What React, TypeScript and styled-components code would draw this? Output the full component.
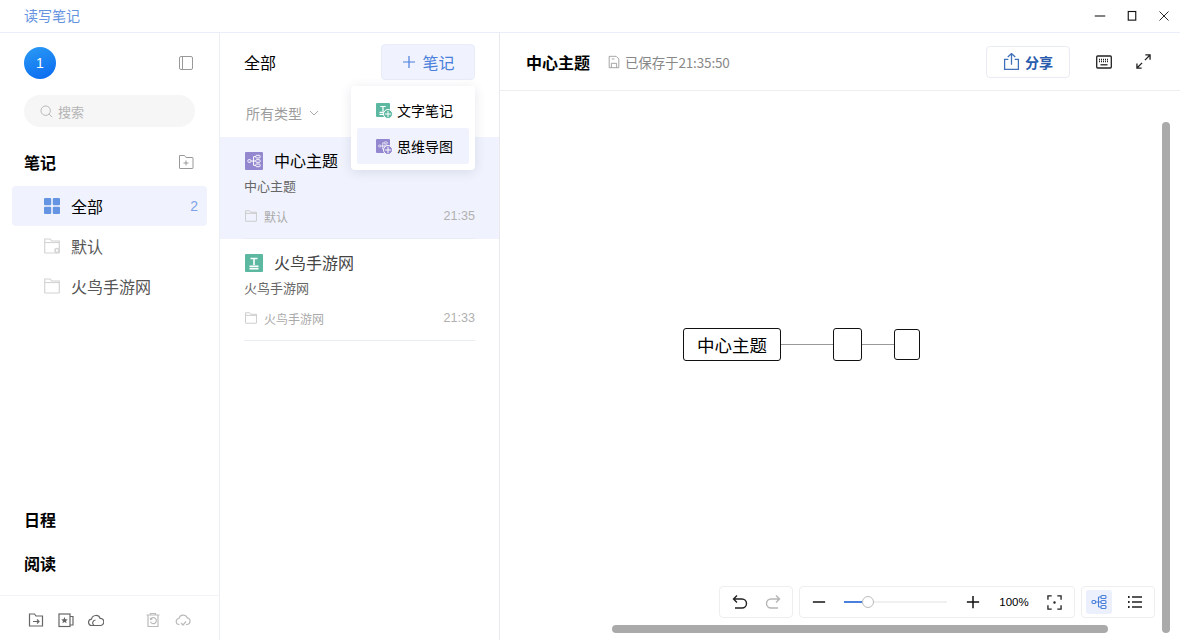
import { FC, ReactNode } from "react";
import styled, { createGlobalStyle } from "styled-components";

const GlobalStyle = createGlobalStyle`
  html, body {
    margin: 0;
    padding: 0;
    background: #fff;
  }
  body {
    font-family: "Noto Sans CJK SC", "Liberation Sans", sans-serif;
    color: #000;
  }
  * {
    box-sizing: border-box;
  }
`;

const Window = styled.div`
  width: 1180px;
  height: 640px;
  display: flex;
  flex-direction: column;
  overflow: hidden;
`;

const TitleBar = styled.header`
  height: 33px;
  flex: none;
  display: flex;
  align-items: center;
  justify-content: space-between;
  padding-left: 24px;
  border-bottom: 1px solid #e9eef8;
`;
const AppName = styled.span`
  font-size: 14px;
  line-height: 30px;
  margin-bottom: 2px;
  color: #6593e0;
`;
const WindowButtons = styled.div`
  display: flex;
  align-items: center;
  padding-right: 10px;
  gap: 20px;
`;

const Body = styled.div`
  flex: 1;
  display: flex;
  min-height: 0;
`;

/* left column */
const Sidebar = styled.aside`
  width: 220px;
  flex: none;
  display: flex;
  flex-direction: column;
  border-right: 1px solid #eceef5;
`;
const UserRow = styled.div`
  display: flex;
  align-items: center;
  justify-content: space-between;
  padding: 14px 25px 0 24px;
`;
const Avatar = styled.div`
  width: 32px;
  height: 32px;
  border-radius: 50%;
  background: linear-gradient(160deg, #2a9bf5, #0a69f0);
  color: #fff;
  font-family: "Liberation Sans", sans-serif;
  font-size: 14px;
  display: flex;
  align-items: center;
  justify-content: center;
`;
const SearchBox = styled.div`
  height: 32px;
  width: 171px;
  margin: 16px 0 0 24px;
  padding-left: 16px;
  border-radius: 16px;
  background: #f6f6f6;
  display: flex;
  align-items: center;
  gap: 5px;
  font-size: 13px;
  color: #b4b4b4;
`;
const SectionHead = styled.div`
  display: flex;
  align-items: center;
  justify-content: space-between;
  padding: 0 25px 0 24px;
  margin-top: 24px;
  height: 22px;
  font-size: 16px;
  font-weight: 700;
  line-height: 22px;
`;
const FolderList = styled.nav`
  margin-top: 13px;
  padding: 0 12px;
  display: flex;
  flex-direction: column;
`;
const FolderRow = styled.div<{ $active?: boolean }>`
  height: 40px;
  display: flex;
  align-items: center;
  padding: 0 9px 0 32px;
  border-radius: 4px;
  background: ${(p) => (p.$active ? "#f0f3fd" : "transparent")};
  color: ${(p) => (p.$active ? "#000" : "#555")};
  font-size: 16px;
`;
const FolderLabel = styled.span`
  margin-left: 11px;
  flex: 1;
`;
const Count = styled.span`
  font-family: "Liberation Sans", sans-serif;
  font-size: 14px;
  color: #7ea3e8;
`;
const Spacer = styled.div`
  flex: 1;
`;
const BottomLink = styled.div`
  font-size: 16px;
  font-weight: 700;
  line-height: 22px;
  padding-left: 24px;
  margin-bottom: 22px;
`;
const SideFooter = styled.div`
  height: 45px;
  flex: none;
  margin-top: -1px;
  border-top: 1px solid #f2f2fa;
  padding: 3px 0 0 28px;
  display: flex;
  align-items: center;
`;
const FooterIcon = styled.span<{ $gap?: number }>`
  display: flex;
  margin-left: ${(p) => p.$gap ?? 0}px;
`;

/* note list */
const ListColumn = styled.section`
  width: 280px;
  flex: none;
  position: relative;
  border-right: 1px solid #e8e8ee;
`;
const ListHead = styled.div`
  display: flex;
  align-items: center;
  justify-content: space-between;
  padding: 11px 24px 0;
  font-size: 16px;
`;
const NewButton = styled.button`
  width: 94px;
  height: 36px;
  border: 1px solid #e8edf9;
  border-radius: 4px;
  background: #f0f3fd;
  color: #4a7fdc;
  font-family: inherit;
  font-size: 16px;
  padding: 0 0 0 2px;
  display: flex;
  align-items: center;
  justify-content: center;
  gap: 7px;
`;
const TypeFilter = styled.div`
  display: flex;
  align-items: center;
  gap: 6px;
  height: 20px;
  margin: 23px 0 14px 26px;
  font-size: 14px;
  color: #9d9d9d;
`;
const NoteItem = styled.article<{ $active?: boolean }>`
  height: 102px;
  padding: 14px 24px 0;
  background: ${(p) => (p.$active ? "#f0f3fd" : "transparent")};
  position: relative;
  &::after {
    content: "";
    position: absolute;
    left: 24px;
    right: 24px;
    bottom: 0;
    height: 1px;
    background: #e9eef4;
  }
`;
const NoteTitle = styled.div<{ $active?: boolean }>`
  display: flex;
  align-items: center;
  gap: 11px;
  height: 20px;
  font-size: 16px;
  color: ${(p) => (p.$active ? "#000" : "#444")};
  padding-left: 1px;
`;
const NoteTitleText = styled.span`
  margin-top: -2px;
`;
const NoteText = styled.div`
  font-size: 13px;
  line-height: 18px;
  margin-top: 6px;
  color: #666;
`;
const NoteMeta = styled.div`
  display: flex;
  align-items: center;
  height: 16px;
  margin-top: 13px;
  padding-left: 1px;
  font-size: 12px;
  color: #aaa;
  gap: 7px;
`;
const NoteTime = styled.span`
  margin-left: auto;
  font-family: "Liberation Sans", sans-serif;
  font-size: 12.6px;
  color: #b0b0b0;
`;
const Popup = styled.div`
  position: absolute;
  top: 53px;
  left: 131px;
  width: 124px;
  height: 84px;
  padding: 6px;
  background: #fff;
  border-radius: 4px;
  box-shadow: 0 2px 12px rgba(40, 50, 90, 0.12);
  display: flex;
  flex-direction: column;
  z-index: 2;
`;
const PopupItem = styled.div<{ $active?: boolean }>`
  height: 36px;
  flex: none;
  display: flex;
  align-items: center;
  gap: 7px;
  padding-left: 19px;
  border-radius: 2px;
  font-size: 14px;
  background: ${(p) => (p.$active ? "#f0f3fd" : "transparent")};
`;

/* editor */
const Main = styled.main`
  flex: 1;
  display: flex;
  flex-direction: column;
  min-width: 0;
`;
const MainHead = styled.div`
  height: 58px;
  flex: none;
  display: flex;
  align-items: center;
  padding: 0 29px 0 26px;
  border-bottom: 1px solid #eeeeee;
`;
const DocTitle = styled.h1`
  margin: 0;
  font-size: 16px;
  font-weight: 700;
`;
const SavedInfo = styled.div`
  display: flex;
  align-items: center;
  gap: 4px;
  margin-left: 17px;
  font-size: 13.5px;
  letter-spacing: -0.15px;
  color: #888;
`;
const ShareButton = styled.button`
  width: 84px;
  height: 32px;
  margin-left: auto;
  border: 1px solid #e8ebf2;
  border-radius: 4px;
  background: #fff;
  color: #2a5cad;
  font-family: inherit;
  font-size: 14px;
  font-weight: 700;
  padding: 0;
  display: flex;
  align-items: center;
  justify-content: center;
  gap: 5px;
`;
const HeadTool = styled.span<{ $gap: number }>`
  display: flex;
  margin-left: ${(p) => p.$gap}px;
`;
const Canvas = styled.div`
  flex: 1;
  position: relative;
  overflow: hidden;
`;
const MapNode = styled.div<{ $x: number; $y: number; $w: number; $h: number }>`
  position: absolute;
  left: ${(p) => p.$x}px;
  top: ${(p) => p.$y}px;
  width: ${(p) => p.$w}px;
  height: ${(p) => p.$h}px;
  border: 1px solid #111;
  border-radius: 3px;
  background: #fff;
  font-size: 17.5px;
  display: flex;
  align-items: center;
  justify-content: center;
`;
const MapLine = styled.div<{ $x: number; $w: number }>`
  position: absolute;
  left: ${(p) => p.$x}px;
  top: 253px;
  width: ${(p) => p.$w}px;
  height: 1px;
  background: #999;
`;
const ScrollY = styled.div`
  position: absolute;
  left: 662px;
  top: 31px;
  width: 8px;
  height: 511px;
  border-radius: 4px;
  background: #aaaaaa;
`;
const ScrollX = styled.div`
  position: absolute;
  left: 112px;
  top: 534px;
  width: 496px;
  height: 8px;
  border-radius: 4px;
  background: #aaaaaa;
`;
const ToolDock = styled.div`
  position: absolute;
  right: 25px;
  top: 495px;
  display: flex;
  gap: 6px;
`;
const ToolGroup = styled.div<{ $w: number }>`
  width: ${(p) => p.$w}px;
  height: 32px;
  background: #fff;
  border: 1px solid #eeeeee;
  border-radius: 4px;
  display: flex;
  align-items: center;
  padding: 0 4px;
`;
const ToolButton = styled.span<{ $active?: boolean; $w?: number; $gap?: number }>`
  width: ${(p) => p.$w ?? 24}px;
  height: 24px;
  flex: none;
  margin-left: ${(p) => p.$gap ?? 0}px;
  border-radius: 3px;
  background: ${(p) => (p.$active ? "#ebf0fc" : "transparent")};
  display: flex;
  align-items: center;
  justify-content: center;
`;
const SliderTrack = styled.div`
  width: 103px;
  height: 2px;
  margin-left: 13px;
  background: #f0f0f0;
  position: relative;
  flex: none;
`;
const SliderFill = styled.div`
  width: 18px;
  height: 2px;
  background: #4a7fdc;
`;
const SliderKnob = styled.div`
  position: absolute;
  left: 18px;
  top: -5px;
  width: 12px;
  height: 12px;
  border-radius: 50%;
  background: #fff;
  border: 1px solid #bbb;
`;
const ZoomValue = styled.span`
  font-family: "Liberation Sans", sans-serif;
  font-size: 11.5px;
  width: 40px;
  margin-left: 9px;
  text-align: center;
  flex: none;
`;

const Icon: FC<{ size?: number; stroke?: string; width?: number; children: ReactNode }> = ({
  size = 16,
  stroke = "#888",
  width = 1,
  children,
}) => (
  <svg
    width={size}
    height={size}
    viewBox="0 0 16 16"
    fill="none"
    stroke={stroke}
    strokeWidth={width}
    style={{ display: "block", flex: "none" }}
  >
    {children}
  </svg>
);

const Folder: FC<{ size?: number; stroke?: string; dot?: boolean }> = ({ size = 16, stroke = "#d4d4d4", dot }) => (
  <Icon size={size} stroke={stroke} width={1.2}>
    <path d="M.7 1h5.5l1.5 2h7.600v11.500a.5.5 0 0 1-.5.5H1.200a.5.5 0 0 1-.5-.5z" />
    <path d="M.7 4.500h14.600" />
    {dot && <circle cx="13" cy="12.500" r="2" fill="#fff" strokeWidth="1.6" />}
  </Icon>
);

const MindGlyph: FC<{ stroke: string; size?: number }> = ({ stroke, size = 16 }) => (
  <Icon size={size} stroke={stroke} width={1.1}>
    <rect x="1" y="6.500" width="3.500" height="3" rx="1" />
    <rect x="10" y="1.500" width="5" height="3" rx="1" />
    <rect x="10" y="6.500" width="5" height="3" rx="1" />
    <rect x="10" y="11.500" width="5" height="3" rx="1" />
    <path d="M4.500 8H10M7.500 3v10M7.500 3H10M7.500 13H10" />
  </Icon>
);

const Badge = styled.span<{ $color: string; $size: number }>`
  width: ${(p) => p.$size}px;
  height: ${(p) => p.$size}px;
  flex: none;
  border-radius: 1px;
  background: ${(p) => p.$color};
  display: flex;
  align-items: center;
  justify-content: center;
  position: relative;
`;
const PlusDot = styled.span<{ $color: string }>`
  position: absolute;
  right: -3px;
  bottom: -2px;
  width: 10px;
  height: 10px;
  border-radius: 50%;
  background: ${(p) => p.$color};
  border: 1px solid #fff;
  display: flex;
  align-items: center;
  justify-content: center;
`;

const PlusMark: FC<{ color: string }> = ({ color }) => (
  <PlusDot $color={color}>
    <svg width="6" height="6" viewBox="0 0 6 6" stroke="#fff" strokeWidth="1">
      <path d="M3 0v6M0 3h6" />
    </svg>
  </PlusDot>
);

const TextBadge: FC<{ size: number; plus?: boolean }> = ({ size, plus }) => (
  <Badge $color="#5cb8a0" $size={size}>
    <svg width={size} height={size} viewBox="0 0 18 18" fill="none" stroke="#fff" strokeWidth="1.6">
      <path d="M5.500 4.500h7M9 4.500v6.500M4.500 12.200h9M4.500 14.600h9" />
    </svg>
    {plus && <PlusMark color="#5cb8a0" />}
  </Badge>
);

const MindBadge: FC<{ size: number; plus?: boolean }> = ({ size, plus }) => (
  <Badge $color="#9387cf" $size={size}>
    <MindGlyph stroke="#fff" size={size - 4} />
    {plus && <PlusMark color="#9387cf" />}
  </Badge>
);

const folders = [
  { id: "default", name: "默认", dot: true },
  { id: "huoniao", name: "火鸟手游网", dot: false },
];

export default function App() {
  return (
    <Window>
      <GlobalStyle />
      <TitleBar>
        <AppName>读写笔记</AppName>
        <WindowButtons>
          <Icon size={12} stroke="#111">
            <path d="M1 8h14" strokeWidth="1.4" />
          </Icon>
          <Icon size={12} stroke="#111">
            <rect x="3" y="2" width="10" height="11.500" strokeWidth="1.500" />
          </Icon>
          <Icon size={12} stroke="#111">
            <path d="M2 2l12 12M14 2L2 14" strokeWidth="1.200" />
          </Icon>
        </WindowButtons>
      </TitleBar>
      <Body>
        <Sidebar>
          <UserRow>
            <Avatar>1</Avatar>
            <Icon stroke="#999">
              <rect x="1.500" y="1.500" width="13" height="13" rx="1.500" />
              <path d="M4.500 1.500v13" />
            </Icon>
          </UserRow>
          <SearchBox>
            <Icon size={13} stroke="#aaa">
              <circle cx="7" cy="7" r="5.800" />
              <path d="M11.200 11.200L15 15" />
            </Icon>
            搜索
          </SearchBox>
          <SectionHead>
            笔记
            <Icon stroke="#999">
              <path d="M1.500 1.500h5l1.500 2h6.500a.5.5 0 0 1 .5.5v10a.5.5 0 0 1-.5.5H2a.5.5 0 0 1-.5-.5z" />
              <path d="M8 6.500v5M5.500 9h5" />
            </Icon>
          </SectionHead>
          <FolderList>
            <FolderRow $active>
              <svg width="16" height="16" viewBox="0 0 16 16" fill="#6594e2">
                <rect width="7.200" height="7.200" rx="1" />
                <rect x="8.800" width="7.200" height="7.200" rx="1" />
                <rect y="8.800" width="7.200" height="7.200" rx="1" />
                <rect x="8.800" y="8.800" width="7.200" height="7.200" rx="1" />
              </svg>
              <FolderLabel>全部</FolderLabel>
              <Count>2</Count>
            </FolderRow>
            {folders.map((folder) => (
              <FolderRow key={folder.id}>
                <Folder dot={folder.dot} />
                <FolderLabel>{folder.name}</FolderLabel>
              </FolderRow>
            ))}
          </FolderList>
          <Spacer />
          <BottomLink>日程</BottomLink>
          <BottomLink>阅读</BottomLink>
          <SideFooter>
            <Icon stroke="#666" width={1.200}>
              <path d="M1.500 2h5l1.500 2h6.500v10h-13z" />
              <path d="M5 9.500h6M9 7.500l2 2-2 2" />
            </Icon>
            <FooterIcon $gap={14}>
              <Icon stroke="#666" width={1.200}>
                <rect x="1" y="2" width="11" height="12.500" />
                <path d="M12 4.500h3v8.500h-3" />
                <path d="M6.500 5l1 2.200 2.300.2-1.800 1.500.6 2.300-2.100-1.200-2.100 1.200.6-2.300-1.800-1.500 2.300-.2z" fill="#666" stroke="none" />
              </Icon>
            </FooterIcon>
            <FooterIcon $gap={14}>
              <Icon stroke="#666" width={1.200}>
                <path d="M4 13.500a3.200 3.200 0 0 1-.5-6.400 4.500 4.500 0 0 1 8.600-.8 3.600 3.600 0 0 1 .2 7.200z" />
                <path d="M6 13.500a3 3 0 0 1 1.500-5.500" />
              </Icon>
            </FooterIcon>
            <FooterIcon $gap={41}>
              <Icon stroke="#bbb" width={1.200}>
                <path d="M1.500 3h13M5.500 3V1.500h5V3M3 3v11.500h10V3" />
                <path d="M5.700 7.200a3 3 0 1 1-.2 2.400M5.500 5.700v1.800h1.800" />
              </Icon>
            </FooterIcon>
            <FooterIcon $gap={14}>
              <Icon stroke="#bbb" width={1.200}>
                <path d="M4.500 12.500a3 3 0 0 1-.5-6 4.300 4.300 0 0 1 8.200-.7 3.400 3.400 0 0 1 .1 6.700H11" />
                <path d="M6 11l2 2 3-3.500" />
              </Icon>
            </FooterIcon>
          </SideFooter>
        </Sidebar>

        <ListColumn>
          <ListHead>
            全部
            <NewButton>
              <svg width="12" height="12" viewBox="0 0 12 12" stroke="#4a7fdc" strokeWidth="1.200">
                <path d="M6 0v12M0 6h12" />
              </svg>
              笔记
            </NewButton>
          </ListHead>
          <TypeFilter>
            所有类型
            <svg width="12" height="12" viewBox="0 0 12 12" fill="none" stroke="#aaa">
              <path d="M2 4l4 4 4-4" />
            </svg>
          </TypeFilter>
          <NoteItem $active>
            <NoteTitle $active>
              <MindBadge size={18} />
              <NoteTitleText>中心主题</NoteTitleText>
            </NoteTitle>
            <NoteText>中心主题</NoteText>
            <NoteMeta>
              <Folder size={12} stroke="#c8c8c8" />
              默认
              <NoteTime>21:35</NoteTime>
            </NoteMeta>
          </NoteItem>
          <NoteItem>
            <NoteTitle>
              <TextBadge size={18} />
              <NoteTitleText>火鸟手游网</NoteTitleText>
            </NoteTitle>
            <NoteText>火鸟手游网</NoteText>
            <NoteMeta>
              <Folder size={12} stroke="#c8c8c8" />
              火鸟手游网
              <NoteTime>21:33</NoteTime>
            </NoteMeta>
          </NoteItem>
          <Popup>
            <PopupItem>
              <TextBadge size={14} plus />
              文字笔记
            </PopupItem>
            <PopupItem $active>
              <MindBadge size={14} plus />
              思维导图
            </PopupItem>
          </Popup>
        </ListColumn>

        <Main>
          <MainHead>
            <DocTitle>中心主题</DocTitle>
            <SavedInfo>
              <Icon size={14} stroke="#999">
                <path d="M2.500 1.500h8l3 3v10h-11z" />
                <path d="M5 14.500v-5h6v5M5.500 4.500h3" />
              </Icon>
              已保存于21:35:50
            </SavedInfo>
            <ShareButton>
              <Icon size={17} stroke="#3f70b8" width={1.200}>
                <path d="M5 6H1.500v9.500h13V6H11" />
                <path d="M8 11V.5M4.500 3.800L8 .5l3.500 3.300" />
              </Icon>
              分享
            </ShareButton>
            <HeadTool $gap={26}>
              <Icon stroke="#222" width={1.300}>
                <rect x="0.700" y="2" width="14.600" height="12" rx="1" />
                <path d="M3 5.500h10M3 7.500h10" strokeDasharray="1 1" />
                <path d="M4.500 10.800h7" />
              </Icon>
            </HeadTool>
            <HeadTool $gap={24}>
              <Icon size={15} stroke="#222" width={1.400}>
                <path d="M9.500 6.500L15 1M10 1h5v5M6.500 9.500L1 15M1 10v5h5" />
              </Icon>
            </HeadTool>
          </MainHead>
          <Canvas>
            <MapLine $x={281} $w={53} />
            <MapLine $x={361} $w={34} />
            <MapNode $x={183} $y={237} $w={98} $h={33}>
              中心主题
            </MapNode>
            <MapNode $x={333} $y={237} $w={29} $h={33} />
            <MapNode $x={394} $y={238} $w={26} $h={31} />
            <ScrollX />
            <ScrollY />
            <ToolDock>
              <ToolGroup $w={74}>
                <ToolButton $gap={4}>
                  <Icon size={16} stroke="#222" width={1.400}>
                    <path d="M5 1.500L1.500 5 5 8.500M1.500 5h8.500a4.500 4.500 0 0 1 0 9H3" />
                  </Icon>
                </ToolButton>
                <ToolButton $gap={9}>
                  <Icon size={16} stroke="#b5b5b5" width={1.400}>
                    <path d="M11 1.500L14.500 5 11 8.500M14.500 5H6a4.500 4.500 0 0 0 0 9h7" />
                  </Icon>
                </ToolButton>
              </ToolGroup>
              <ToolGroup $w={276}>
                <ToolButton $gap={3}>
                  <Icon size={14} stroke="#111" width={1.700}>
                    <path d="M1 8h14" />
                  </Icon>
                </ToolButton>
                <SliderTrack>
                  <SliderFill />
                  <SliderKnob />
                </SliderTrack>
                <ToolButton $gap={14}>
                  <Icon size={14} stroke="#111" width={1.700}>
                    <path d="M1 8h14M8 1v14" />
                  </Icon>
                </ToolButton>
                <ZoomValue>100%</ZoomValue>
                <ToolButton $gap={8}>
                  <Icon size={15} stroke="#222" width={1.400}>
                    <path d="M1 5V1h4M11 1h4v4M15 11v4h-4M5 15H1v-4" />
                    <circle cx="8" cy="8" r="0.600" fill="#222" />
                  </Icon>
                </ToolButton>
              </ToolGroup>
              <ToolGroup $w={74}>
                <ToolButton $active $w={26}>
                  <MindGlyph stroke="#4a7fdc" />
                </ToolButton>
                <ToolButton $gap={11}>
                  <Icon size={16} stroke="#222" width={1.300}>
                    <path d="M5 3h10M5 8h10M5 13h10" />
                    <path d="M1 3h1.600M1 8h1.600M1 13h1.600" strokeWidth="1.800" />
                  </Icon>
                </ToolButton>
              </ToolGroup>
            </ToolDock>
          </Canvas>
        </Main>
      </Body>
    </Window>
  );
}
